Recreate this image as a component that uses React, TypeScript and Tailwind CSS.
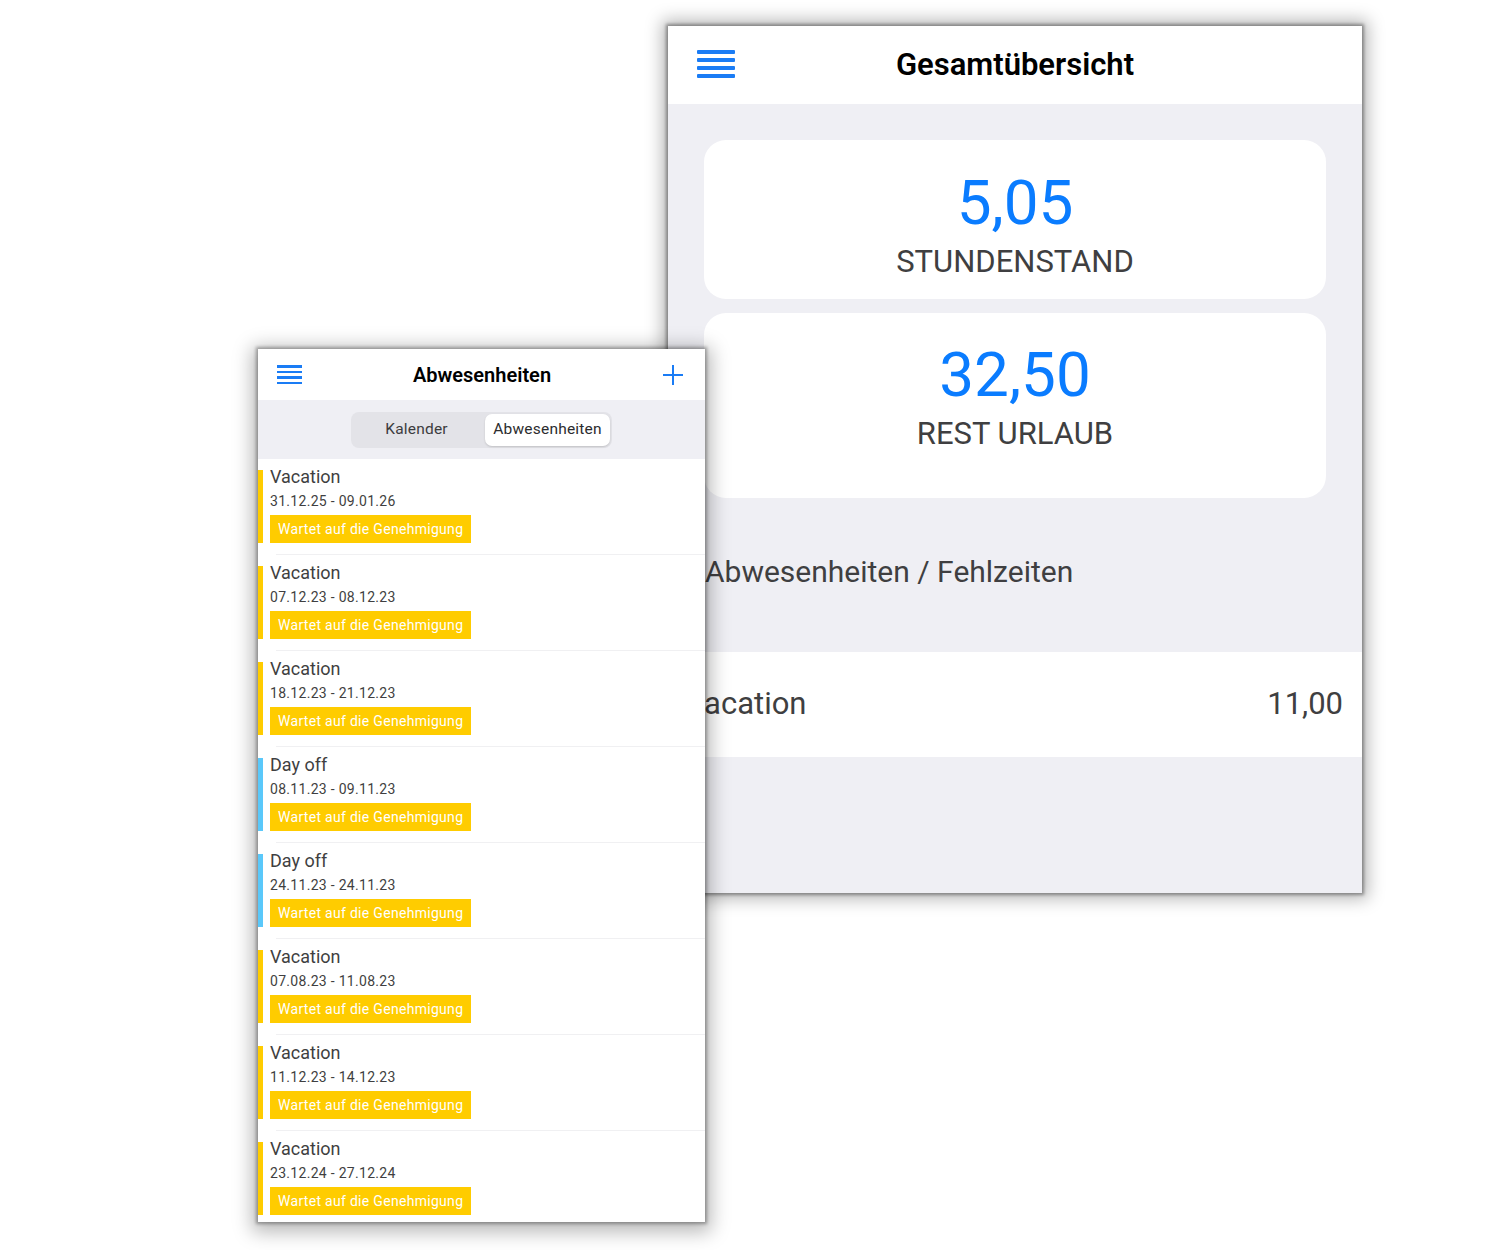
import React from "react";

const font = { fontFamily: 'Roboto, "Noto Sans", sans-serif' };

type Absence = { kind: "Vacation" | "Day off"; range: string };

const absences: Absence[] = [
  { kind: "Vacation", range: "31.12.25 - 09.01.26" },
  { kind: "Vacation", range: "07.12.23 - 08.12.23" },
  { kind: "Vacation", range: "18.12.23 - 21.12.23" },
  { kind: "Day off", range: "08.11.23 - 09.11.23" },
  { kind: "Day off", range: "24.11.23 - 24.11.23" },
  { kind: "Vacation", range: "07.08.23 - 11.08.23" },
  { kind: "Vacation", range: "11.12.23 - 14.12.23" },
  { kind: "Vacation", range: "23.12.24 - 27.12.24" },
];

function MenuIcon({ big }: { big?: boolean }) {
  if (big) {
    return (
      <div className="flex w-[38px] flex-col gap-[4px]">
        <div className="h-[4px] rounded-[1px] bg-[#1a7cf5]" />
        <div className="h-[4px] rounded-[1px] bg-[#1a7cf5]" />
        <div className="h-[4px] rounded-[1px] bg-[#1a7cf5]" />
        <div className="h-[4px] rounded-[1px] bg-[#1a7cf5]" />
      </div>
    );
  }
  return (
    <div className="flex w-[25px] flex-col gap-[3px]">
      <div className="h-[2.5px] bg-[#1a7cf5]" />
      <div className="h-[2.5px] bg-[#1a7cf5]" />
      <div className="h-[2.5px] bg-[#1a7cf5]" />
      <div className="h-[2.5px] bg-[#1a7cf5]" />
    </div>
  );
}

function PlusIcon() {
  return (
    <svg width="22" height="22" viewBox="0 0 22 22">
      <path d="M11 1v20M1 11h20" stroke="#1a7cf5" strokeWidth="2" fill="none" />
    </svg>
  );
}

function OverviewScreen() {
  return (
    <div
      className="absolute left-[668px] top-[26px] flex h-[867px] w-[694px] flex-col overflow-hidden bg-[#efeff4] shadow-[0_0_3px_2px_rgba(0,0,0,0.35),0_0_16px_6px_rgba(0,0,0,0.28)]"
      style={font}
    >
      <div className="relative flex h-[78px] shrink-0 items-center justify-center bg-white">
        <div className="absolute left-[29px] top-[24px]">
          <MenuIcon big />
        </div>
        <div className="text-[31px] font-semibold text-black">Gesamtübersicht</div>
      </div>

      <div className="flex flex-col gap-[14px] px-[36px] pt-[36px]">
        <div className="flex h-[159px] flex-col items-center rounded-[22px] bg-white pt-[27px]">
          <div className="text-[62px] leading-[72px] text-[#0a7cff]">5,05</div>
          <div className="mt-[5px] text-[31px] leading-[36px] text-[#3f3f41]">STUNDENSTAND</div>
        </div>
        <div className="flex h-[185px] flex-col items-center rounded-[22px] bg-white pt-[26px]">
          <div className="text-[62px] leading-[72px] text-[#0a7cff]">32,50</div>
          <div className="mt-[5px] text-[31px] leading-[36px] text-[#3f3f41]">REST URLAUB</div>
        </div>
      </div>

      <div className="h-[154px] shrink-0 pl-[37px] pt-[56px] text-[30px] leading-[36px] text-[#3f3f41]">
        Abwesenheiten / Fehlzeiten
      </div>

      <div className="flex h-[105px] shrink-0 items-center justify-between bg-white pl-[17px] pr-[19px] text-[31px] text-[#3f3f41]">
        <span>Vacation</span>
        <span>11,00</span>
      </div>
    </div>
  );
}

function AbsenceRow({ item }: { item: Absence }) {
  const bar = item.kind === "Vacation" ? "bg-[#ffcc00]" : "bg-[#5ac8fa]";
  return (
    <div className="flex h-[96px] shrink-0 flex-col pt-[11px]">
      <div className="flex">
        <div className={`w-[5px] ${bar}`} />
        <div className="flex flex-col pl-[7px]">
          <div className="text-[18px] leading-[14px] text-[#3f3f41]">{item.kind}</div>
          <div className="mt-[7px] text-[14px] leading-[20px] tracking-[0.3px] text-[#3f3f41]">{item.range}</div>
          <div className="mt-[4px] flex h-[28px] w-[201px] items-center bg-[#ffcc00] pl-[8px] text-[14px] tracking-[0.3px] text-white">
            Wartet auf die Genehmigung
          </div>
        </div>
      </div>
      <div className="mt-[11px] ml-[18px] h-px bg-[#f0f0f2]" />
    </div>
  );
}

function AbsencesScreen() {
  return (
    <div
      className="absolute left-[258px] top-[349px] flex h-[873px] w-[447px] flex-col overflow-hidden bg-white shadow-[0_0_3px_2px_rgba(0,0,0,0.3),0_4px_18px_6px_rgba(0,0,0,0.28)]"
      style={font}
    >
      <div className="flex h-[51px] shrink-0 items-center justify-between bg-white pl-[19px] pr-[21px]">
        <MenuIcon />
        <div className="text-[20px] font-semibold text-black">Abwesenheiten</div>
        <PlusIcon />
      </div>

      <div className="flex h-[59px] shrink-0 items-center justify-center bg-[#efeff4]">
        <div className="flex h-[36px] w-[261px] items-center rounded-[8px] bg-[#e3e3e8] p-[2px]">
          <div className="flex flex-1 items-center justify-center pr-[5px] text-[15.5px] tracking-[0.2px] text-[#3c3c3e]">
            Kalender
          </div>
          <div className="flex h-[32px] w-[125px] items-center justify-center rounded-[7px] bg-white text-[15.5px] tracking-[0.2px] text-[#2c2c2e] shadow-[0_1px_2px_rgba(0,0,0,0.15)]">
            Abwesenheiten
          </div>
        </div>
      </div>

      <div className="flex flex-col">
        {absences.map((a, i) => (
          <AbsenceRow key={i} item={a} />
        ))}
      </div>
    </div>
  );
}

export default function App() {
  return (
    <div className="relative h-[1250px] w-[1500px] overflow-hidden bg-white">
      <OverviewScreen />
      <AbsencesScreen />
    </div>
  );
}
